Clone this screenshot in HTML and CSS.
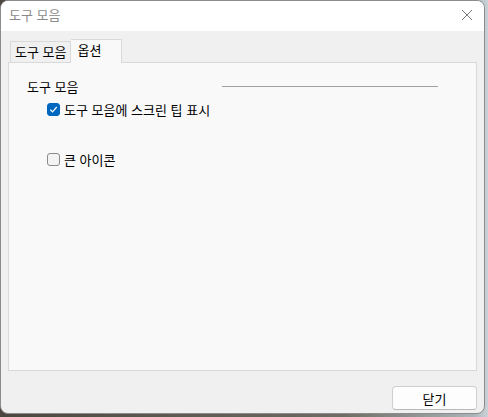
FILE: index.html
```html
<!DOCTYPE html>
<html lang="ko">
<head>
<meta charset="utf-8">
<link rel="stylesheet" href="styles.css">
</head>
<body>
<div class="window">
  <div class="titlebar">
    <span class="title">도구 모음</span>
    <svg class="close" width="12" height="12" viewBox="0 0 12 12"><path d="M1 1 L11 11 M11 1 L1 11" stroke="#7a7a7a" stroke-width="1" fill="none"/></svg>
  </div>
  <div class="content">
    <div class="tabs">
      <div class="tab">도구 모음</div>
      <div class="tab active">옵션</div>
    </div>
    <div class="panel">
      <div class="group-head">
        <span class="group-label">도구 모음</span>
        <span class="group-line"></span>
      </div>
      <label class="check-row">
        <span class="box checked"><svg width="9" height="9" viewBox="0 0 9 9"><path d="M1.2 4.6 L3.5 6.8 L7.8 2" stroke="#fff" stroke-width="1.2" fill="none"/></svg></span>
        <span>도구 모음에 스크린 팁 표시</span>
      </label>
      <label class="check-row second">
        <span class="box"></span>
        <span>큰 아이콘</span>
      </label>
    </div>
    <div class="footer">
      <button class="btn">닫기</button>
    </div>
  </div>
</div>
</body>
</html>
```
FILE: styles.css
```css
html, body {
  margin: 0;
  padding: 0;
}
body {
  width: 488px;
  height: 417px;
  overflow: hidden;
  background: linear-gradient(to right, #4b463f 0%, #6f6a63 70%, #aab4b8 97%, #c9d3d7 100%);
  font-family: "Noto Sans CJK KR", "Noto Sans", sans-serif;
  font-size: 13px;
  color: #000;
}
.window {
  width: 483px;
  height: 412px;
  border: 1px solid #8c8c8c;
  border-radius: 8px;
  background: #f0f0f0;
  overflow: hidden;
  display: flex;
  flex-direction: column;
}
.titlebar {
  height: 30px;
  background: #ffffff;
  display: flex;
  align-items: center;
  justify-content: space-between;
  padding: 0 11px 0 8px;
  flex: none;
}
.title {
  color: #8a8a8a;
  line-height: 1;
  margin-top: -3px;
}
.close {
  margin-top: -2px;
}
.content {
  padding: 8px 7px 0 7px;
  display: flex;
  flex-direction: column;
  flex: 1;
}
.tabs {
  display: flex;
  align-items: flex-end;
  padding-left: 2px;
  height: 23px;
  position: relative;
  z-index: 1;
}
.tab {
  height: 21px;
  line-height: 19px;
  padding: 0 4px;
  border: 1px solid #d9d9d9;
  border-bottom: none;
  background: #f0f0f0;
  box-sizing: border-box;
}
.tab.active {
  height: 24px;
  width: 51px;
  line-height: 20px;
  padding: 0 0 0 6px;
  background: #f9f9f9;
  border-left: none;
  margin-bottom: -1px;
}
.panel {
  height: 309px;
  box-sizing: border-box;
  border: 1px solid #d9d9d9;
  background: #f9f9f9;
  padding: 14px 38px 0 18px;
}
.group-head {
  display: flex;
  align-items: center;
  height: 18px;
}
.group-line {
  margin-left: auto;
  width: 216px;
  height: 1px;
  background: #a0a0a0;
}
.check-row {
  display: flex;
  align-items: center;
  gap: 4px;
  margin-left: 20px;
  margin-top: 5px;
  height: 18px;
}
.check-row.second {
  margin-top: 32px;
}
.box {
  width: 13px;
  height: 13px;
  box-sizing: border-box;
  border: 1px solid #8a8a8a;
  border-radius: 3px;
  background: #f3f3f3;
  display: flex;
  align-items: center;
  justify-content: center;
  flex: none;
}
.box.checked {
  background: #0067c0;
  border-color: #0067c0;
}
.footer {
  display: flex;
  justify-content: flex-end;
  padding-top: 15px;
}
.btn {
  width: 85px;
  height: 24px;
  font-family: inherit;
  font-size: 13px;
  color: #000;
  background: #fdfdfd;
  border: 1px solid #cfcfcf;
  border-bottom-color: #b8b8b8;
  border-radius: 4px;
  padding: 0;
}
```
